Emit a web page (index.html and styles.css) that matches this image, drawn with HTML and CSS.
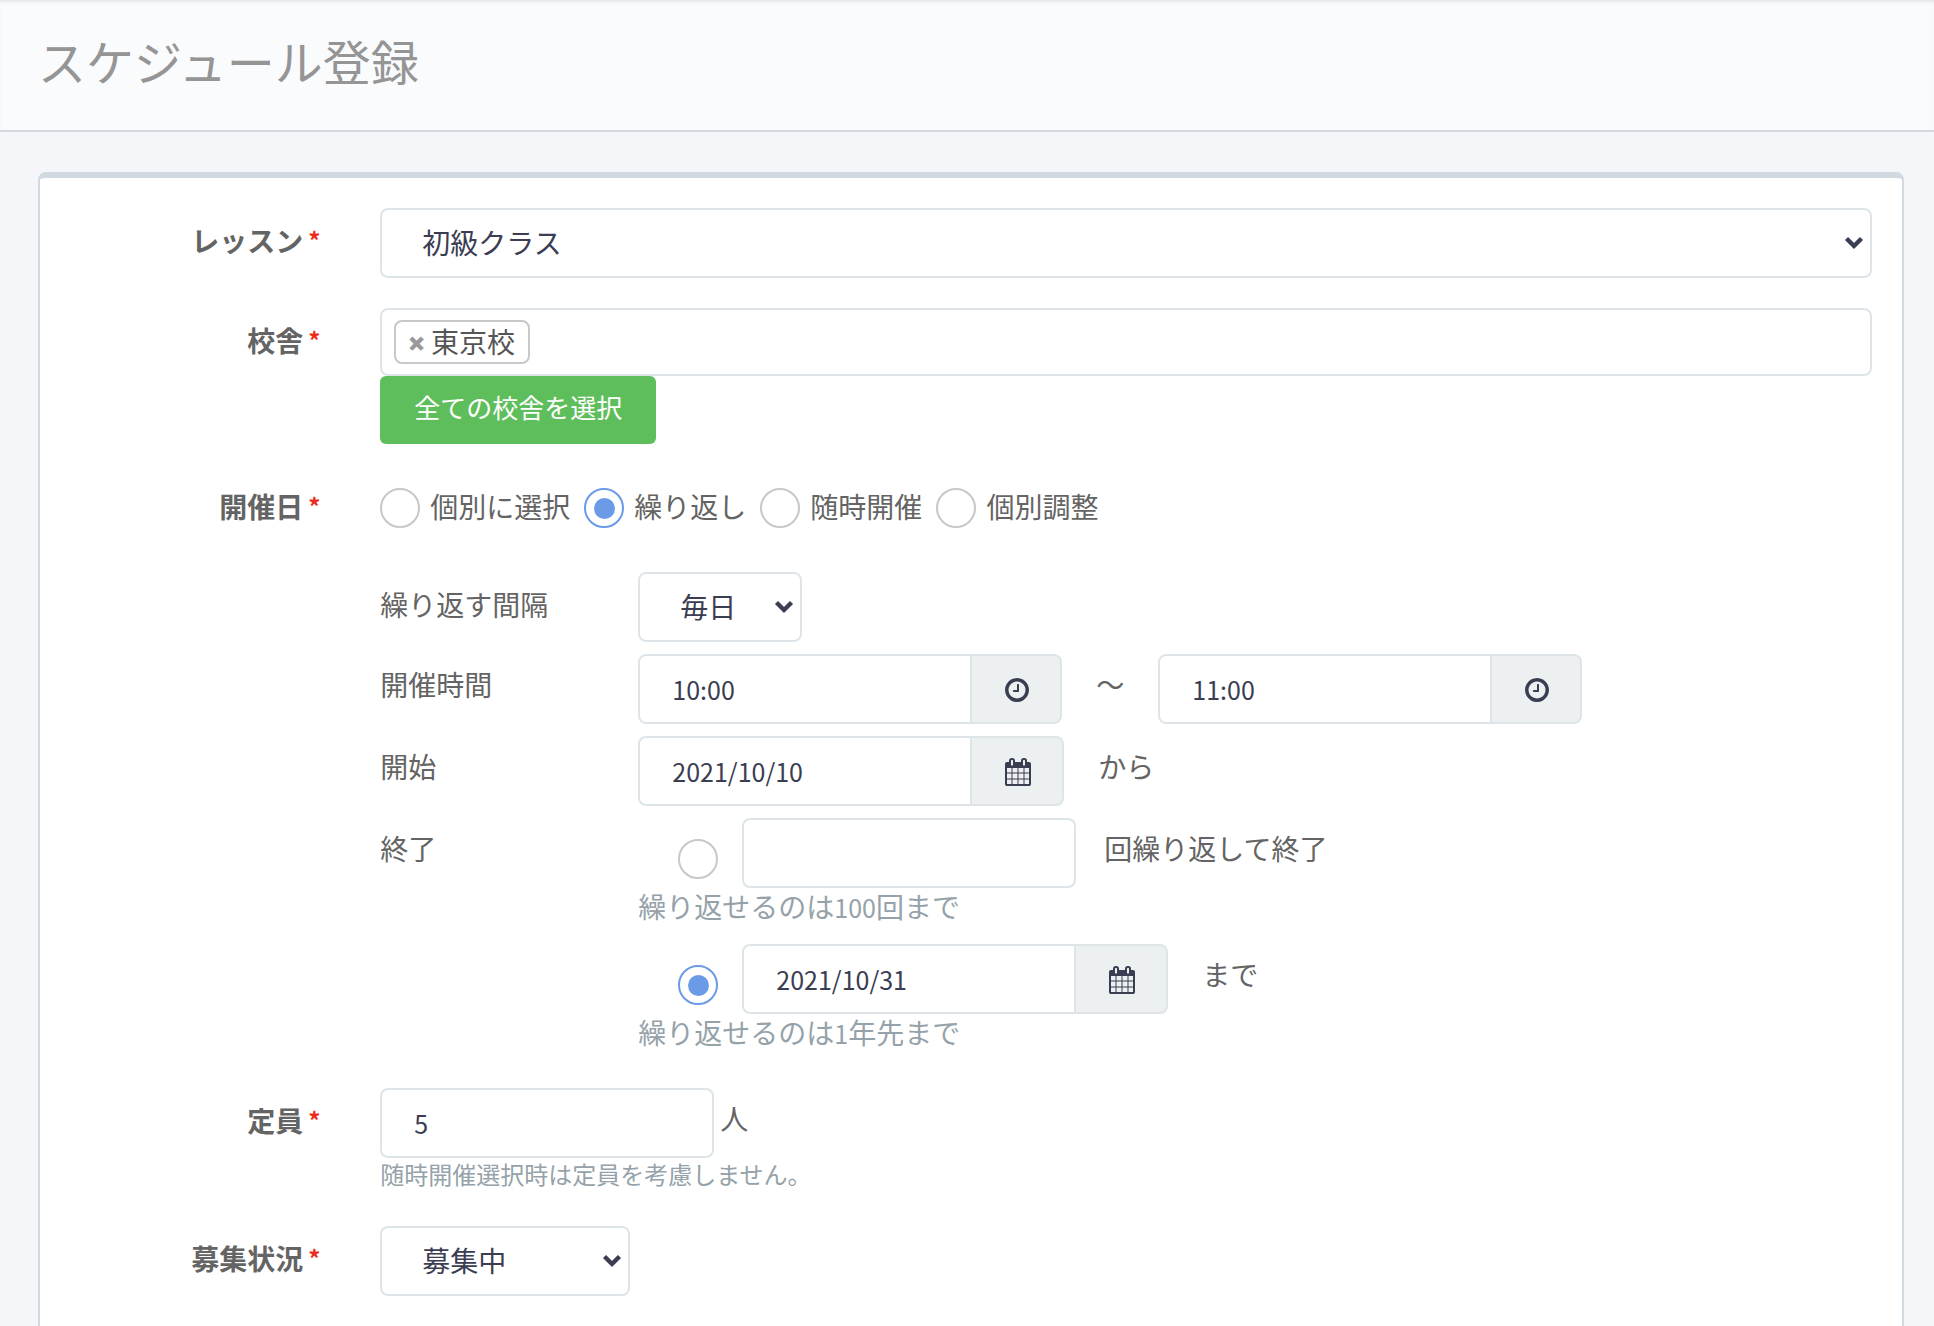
FILE: index.html
```html
<!DOCTYPE html>
<html lang="ja">
<head>
<meta charset="utf-8">
<meta name="viewport" content="width=device-width, initial-scale=1">
<title>スケジュール登録</title>
<link rel="stylesheet" href="styles.css">
</head>
<body>
<svg class="sprite" aria-hidden="true">
  <symbol id="icon-clock" viewBox="0 128 1536 1536"><path d="M896 544v448q0 14-9 23t-23 9h-320q-14 0-23-9t-9-23v-64q0-14 9-23t23-9h224v-352q0-14 9-23t23-9h64q14 0 23 9t9 23zm416 352q0-148-73-273t-198-198-273-73-273 73-198 198-73 273 73 273 198 198 273 73 273-73 198-198 73-273zm224 0q0 209-103 385.500t-279.500 279.500-385.500 103-385.500-103-279.500-279.500-103-385.500 103-385.500 279.500-279.500 385.500-103 385.500 103 279.500 279.500 103 385.500z"/></symbol>
  <symbol id="icon-calendar" viewBox="64 0 1664 1792"><path d="M192 1664h288v-288h-288v288zm352 0h320v-288h-320v288zm-352-352h288v-320h-288v320zm352 0h320v-320h-320v320zm-352-384h288v-288h-288v288zm736 736h320v-288h-320v288zm-384-736h320v-288h-320v288zm768 736h288v-288h-288v288zm-384-352h320v-320h-320v320zm-352-864v-288q0-13-9.500-22.500t-22.500-9.500h-64q-13 0-22.500 9.500t-9.500 22.500v288q0 13 9.500 22.500t22.500 9.500h64q13 0 22.500-9.500t9.500-22.500zm736 864h288v-320h-288v320zm-384-384h320v-288h-320v288zm384 0h288v-288h-288v288zm32-480v-288q0-13-9.500-22.500t-22.500-9.500h-64q-13 0-22.500 9.500t-9.500 22.500v288q0 13 9.500 22.500t22.500 9.500h64q13 0 22.500-9.500t9.500-22.500zm384-64v1280q0 52-38 90t-90 38h-1408q-52 0-90-38t-38-90v-1280q0-52 38-90t90-38h128v-96q0-66 47-113t113-47h64q66 0 113 47t47 113v96h384v-96q0-66 47-113t113-47h64q66 0 113 47t47 113v96h128q52 0 90 38t38 90z"/></symbol>
</svg>
<div class="page">
  <header class="page-header">
    <h1 class="page-title">スケジュール登録</h1>
  </header>
  <main class="content">
    <form class="card">
      <div class="form-row">
        <label class="form-label" for="lesson">レッスン<span class="required">*</span></label>
        <div class="form-field">
          <select class="control select" id="lesson"><option>初級クラス</option></select>
        </div>
      </div>

      <div class="form-row">
        <span class="form-label" id="school-label">校舎<span class="required">*</span></span>
        <div class="form-field">
          <div class="tag-box" role="group" aria-labelledby="school-label">
            <span class="tag"><button class="tag-remove" type="button">×</button>東京校</span>
          </div>
          <button class="btn-select-all" type="button">全ての校舎を選択</button>
        </div>
      </div>

      <div class="form-row">
        <span class="form-label" id="date-label">開催日<span class="required">*</span></span>
        <div class="form-field">
          <div class="radio-list" role="radiogroup" aria-labelledby="date-label">
            <label class="radio-item"><input class="radio" type="radio" name="kind"><span class="radio-text">個別に選択</span></label>
            <label class="radio-item"><input class="radio" type="radio" name="kind" checked><span class="radio-text">繰り返し</span></label>
            <label class="radio-item"><input class="radio" type="radio" name="kind"><span class="radio-text">随時開催</span></label>
            <label class="radio-item"><input class="radio" type="radio" name="kind"><span class="radio-text">個別調整</span></label>
          </div>

          <div class="repeat">
            <label class="repeat-label label-interval" for="interval">繰り返す間隔</label>
            <div class="repeat-line">
              <select class="control select select-interval" id="interval"><option>毎日</option></select>
            </div>

            <label class="repeat-label" for="time-from">開催時間</label>
            <div class="repeat-line line-wide">
              <div class="input-group">
                <input class="control input" id="time-from" type="text" value="10:00">
                <button class="addon" type="button" aria-label="開始時刻"><svg class="icon-clock"><use href="#icon-clock"/></svg></button>
              </div>
              <span class="suffix">～</span>
              <div class="input-group">
                <input class="control input" type="text" value="11:00" aria-label="終了時刻">
                <button class="addon" type="button" aria-label="終了時刻"><svg class="icon-clock"><use href="#icon-clock"/></svg></button>
              </div>
            </div>

            <label class="repeat-label" for="date-from">開始</label>
            <div class="repeat-line line-wide">
              <div class="input-group">
                <input class="control input" id="date-from" type="text" value="2021/10/10">
                <button class="addon" type="button" aria-label="開始日"><svg class="icon-calendar"><use href="#icon-calendar"/></svg></button>
              </div>
              <span class="suffix">から</span>
            </div>

            <span class="repeat-label">終了</span>
            <div class="repeat-end">
              <div>
                <div class="repeat-line line-count">
                  <input class="radio radio-end" type="radio" name="end" aria-label="回数で終了">
                  <input class="control input" id="count" type="text">
                  <label class="suffix" for="count">回繰り返して終了</label>
                </div>
                <p class="help">繰り返せるのは<span class="num">100</span>回まで</p>
              </div>
              <div>
                <div class="repeat-line line-wide">
                  <input class="radio radio-end" type="radio" name="end" checked aria-label="日付で終了">
                  <div class="input-group">
                    <input class="control input" id="date-to" type="text" value="2021/10/31">
                    <button class="addon" type="button" aria-label="終了日"><svg class="icon-calendar"><use href="#icon-calendar"/></svg></button>
                  </div>
                  <label class="suffix" for="date-to">まで</label>
                </div>
                <p class="help">繰り返せるのは<span class="num">1</span>年先まで</p>
              </div>
            </div>
          </div>
        </div>
      </div>

      <div class="form-row">
        <label class="form-label" for="capacity">定員<span class="required">*</span></label>
        <div class="form-field">
          <div class="repeat-line line-tight">
            <input class="control input" id="capacity" type="text" value="5">
            <span class="suffix">人</span>
          </div>
          <p class="help help-small">随時開催選択時は定員を考慮しません。</p>
        </div>
      </div>

      <div class="form-row">
        <label class="form-label" for="status">募集状況<span class="required">*</span></label>
        <div class="form-field">
          <select class="control select select-status" id="status"><option>募集中</option></select>
        </div>
      </div>
    </form>
  </main>
</div>
</body>
</html>
```

FILE: styles.css
```css
* {
  box-sizing: border-box;
}

body {
  margin: 0;
  background: #f5f6fa;
  color: #646464;
  font-family: "Noto Sans CJK JP", sans-serif;
  font-size: 28px;
  line-height: 40px;
}

button,
input,
select {
  margin: 0;
  font-family: inherit;
}

.sprite {
  display: none;
}

.page {
  height: 100vh;
  overflow-y: auto;
  scrollbar-width: none;
}

/* Header */
.page-header {
  padding: 30px 38px 40px;
  border-bottom: 2px solid #d1dae1;
  background: #fafbfd;
  box-shadow: inset 0 3px 3px -1px #e4e6e8;
}

.page-title {
  margin: 0;
  color: #959595;
  font-size: 48px;
  font-weight: 400;
  line-height: 60px;
}

/* Card and its rows */
.content {
  padding: 40px 30px 40px 38px;
}

.card {
  display: flex;
  flex-direction: column;
  gap: 30px;
  padding: 30px 0 60px;
  border: 2px solid #d1dae1;
  border-top-width: 6px;
  border-radius: 8px;
  background: #fff;
}

.form-row {
  display: grid;
  grid-template-columns: 1fr 5fr;
}

.form-label {
  display: flex;
  justify-content: flex-end;
  padding: 12px 30px 0;
  font-weight: 700;
}

.required {
  margin-left: 5px;
  color: #ec2d1c;
  font-size: 24px;
}

.form-field {
  min-width: 0;
  padding: 0 30px;
}

/* Controls */
.control {
  display: block;
  height: 70px;
  border: 2px solid #dde5e9;
  border-radius: 8px;
  background-color: #fff;
  color: #3b3d52;
}

.select {
  width: 100%;
  padding: 0 40px 2px;
  appearance: none;
  background-image: url("data:image/svg+xml,%3Csvg xmlns='http://www.w3.org/2000/svg' width='20' height='14' viewBox='0 0 20 14'%3E%3Cpath d='M2.500 2.500 10 10 17.500 2.500' fill='none' stroke='%233b3d52' stroke-width='4.400'/%3E%3C/svg%3E");
  background-position: right 6px center;
  background-repeat: no-repeat;
  font-size: 28px;
}

.select-interval {
  width: 164px;
}

.select-status {
  width: 250px;
}

.input {
  width: 334px;
  padding: 0 32px;
  font-size: 25px;
}

.input-group {
  display: flex;
}

.input-group .input {
  border-radius: 8px 0 0 8px;
}

.addon {
  display: flex;
  align-items: center;
  padding: 2px 31px 0 33px;
  border: 2px solid #dde5e9;
  border-left: 0;
  border-radius: 0 8px 8px 0;
  background: #ecf0f1;
  color: #3b3d52;
}

.icon-clock {
  width: 24px;
  height: 24px;
  fill: currentColor;
}

.icon-calendar {
  width: 26px;
  height: 28px;
  fill: currentColor;
}

/* School picker */
.tag-box {
  display: flex;
  align-items: flex-start;
  height: 68px;
  padding: 10px 12px;
  border: 2px solid #dde5e9;
  border-radius: 8px;
}

.tag {
  display: flex;
  align-items: center;
  gap: 5px;
  height: 44px;
  padding: 0 13px 3px 11px;
  border: 2px solid #c8c8c8;
  border-radius: 8px;
  color: #555;
}

.tag-remove {
  padding: 4px 0 0;
  border: 0;
  background: none;
  color: #999;
  font-family: "Open Sans", sans-serif;
  font-size: 32px;
  font-weight: 800;
  line-height: 36px;
}

.btn-select-all {
  display: block;
  height: 68px;
  padding: 0 34px 8px;
  border: 0;
  border-radius: 6px;
  background: #5fbe5c;
  color: #fff;
  font-size: 26px;
}

/* Radios */
.radio {
  display: grid;
  flex: none;
  place-items: center;
  width: 40px;
  height: 40px;
  border: 2px solid #c8c8c8;
  border-radius: 50%;
  appearance: none;
  background: #fff;
}

.radio:checked {
  border-color: #6b9ae7;
}

.radio:checked::before {
  width: 21px;
  height: 21px;
  border-radius: 50%;
  background: #6b9ae7;
  content: "";
}

.radio-list {
  display: flex;
  flex-wrap: wrap;
  gap: 14px;
  padding: 14px 0 44px;
}

.radio-item {
  display: flex;
  gap: 10px;
}

.radio-text {
  line-height: 36px;
}

/* Repeat settings */
.repeat {
  display: grid;
  grid-template-columns: 258px 1fr;
  row-gap: 12px;
}

.repeat-label,
.suffix {
  padding-top: 10px;
}

.label-interval {
  padding-top: 12px;
}

.repeat-line {
  display: flex;
}

.line-wide {
  gap: 34px;
}

.line-count {
  gap: 28px;
}

.line-tight {
  gap: 6px;
}

.repeat-end {
  display: grid;
  row-gap: 12px;
}

.radio-end {
  margin: 21px 0 0 40px;
}

.line-wide .radio-end {
  margin-right: -10px;
}

.line-count .radio-end {
  margin-right: -4px;
}

.help {
  margin: 0;
  padding-bottom: 8px;
  color: #95a2a9;
  line-height: 36px;
}

.num {
  font-size: 25px;
  line-height: 1;
}

.help-small {
  padding-bottom: 6px;
  font-size: 24px;
  line-height: 32px;
}
```
